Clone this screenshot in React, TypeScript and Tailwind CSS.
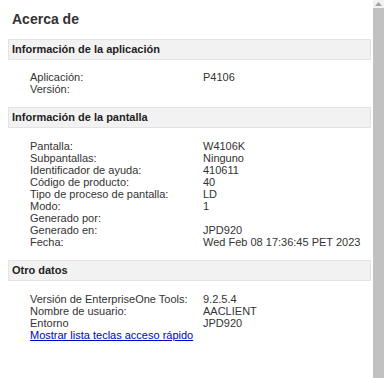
import React from "react";

const font = { fontFamily: '"Liberation Sans", Arial, sans-serif' };

function Header({ title }: { title: string }) {
  return (
    <div className="h-[21px] bg-[#f2f2f2] border border-[#e3e3e3] flex items-center pl-[3px] text-[11px] font-bold text-[#222]">
      {title}
    </div>
  );
}

function Rows({ rows }: { rows: [string, string][] }) {
  return (
    <div className="pl-[22px] flex flex-col">
      {rows.map(([k, v], i) => (
        <div key={i} className="flex h-[12px] items-center text-[11px] text-[#333] leading-[12px] whitespace-nowrap">
          <div className="w-[173px] shrink-0">{k}</div>
          <div>{v}</div>
        </div>
      ))}
    </div>
  );
}

export default function App() {
  return (
    <div className="w-[384px] h-[378px] overflow-hidden flex bg-white" style={font}>
      <div className="flex-1 pl-[8px] pr-[2px]">
        <div className="h-[39px] pl-[4px] pt-[10px] text-[14px] font-bold text-[#333] leading-[18px]">Acerca de</div>
        <Header title="Información de la aplicación" />
        <div className="pt-[11px] pb-[12px]">
          <Rows rows={[["Aplicación:", "P4106"], ["Versión:", ""]]} />
        </div>
        <Header title="Información de la pantalla" />
        <div className="pt-[12px] pb-[12px]">
          <Rows
            rows={[
              ["Pantalla:", "W4106K"],
              ["Subpantallas:", "Ninguno"],
              ["Identificador de ayuda:", "410611"],
              ["Código de producto:", "40"],
              ["Tipo de proceso de pantalla:", "LD"],
              ["Modo:", "1"],
              ["Generado por:", ""],
              ["Generado en:", "JPD920"],
              ["Fecha:", "Wed Feb 08 17:36:45 PET 2023"],
            ]}
          />
        </div>
        <Header title="Otro datos" />
        <div className="pt-[12px]">
          <Rows
            rows={[
              ["Versión de EnterpriseOne Tools:", "9.2.5.4"],
              ["Nombre de usuario:", "AACLIENT"],
              ["Entorno", "JPD920"],
            ]}
          />
          <div className="pl-[22px] h-[12px] flex items-center text-[11px] leading-[12px]">
            <a href="#" className="text-[#0000cc] underline">Mostrar lista teclas acceso rápido</a>
          </div>
        </div>
      </div>
      <div className="w-[11px] flex flex-col bg-[#c1c1c1]">
        <div className="h-[8px] bg-[#f1f1f1] flex items-center justify-center">
          <svg width="7" height="4" viewBox="0 0 7 4"><path d="M0 4 L3.5 0 L7 4 Z" fill="#a3a3a3" /></svg>
        </div>
        <div className="flex-1 bg-[#c1c1c1]" />
      </div>
    </div>
  );
}
